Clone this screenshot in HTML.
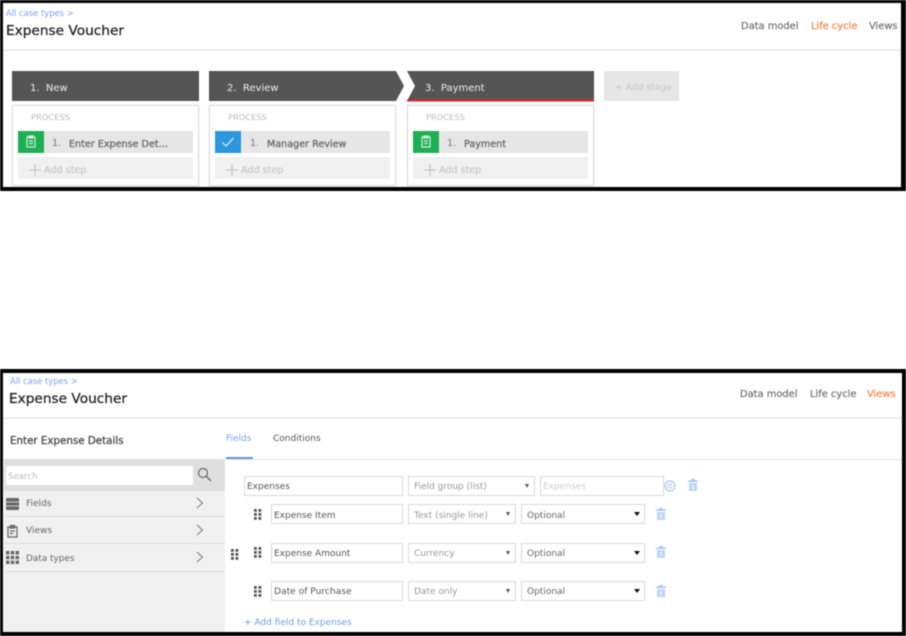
<!DOCTYPE html>
<html><head><meta charset="utf-8">
<style>
html,body{margin:0;padding:0;background:#fff}
#p{position:relative;width:906px;height:636px;overflow:hidden;background:#fff;font-family:"DejaVu Sans","Liberation Sans",sans-serif}
#b{position:absolute;left:0;top:0;width:906px;height:636px;filter:blur(.65px)}
#b div,#b svg{position:absolute}
.t{white-space:nowrap;line-height:14px;font-size:9px;color:#555}
.h{-webkit-text-stroke:.25px currentColor}
.bar{background:#555}
.card{border:1px solid #dcdcdc;box-shadow:0 0 1px #ccc;background:#fff;box-sizing:border-box}
.step{background:#e6e6e6}
.add{background:#f0f0f0}
.in{border:1px solid #d8d8d8;box-sizing:border-box;background:#fff;height:20px}
.car{width:0;height:0;border-left:2.5px solid transparent;border-right:2.5px solid transparent;border-top:4px solid #555}
.car2{border-top-color:#111;border-left-width:3px;border-right-width:3px}
.ln{background:#e3e3e3;height:1px}
</style></head><body>
<div id="p"><div id="b">
<!-- top panel frame -->
<div style="left:0;top:0;width:906px;height:3px;background:#000"></div>
<div style="left:0;top:0;width:3px;height:191px;background:#000"></div>
<div style="left:901px;top:0;width:5px;height:191px;background:#000"></div>
<div style="left:0;top:187px;width:906px;height:4px;background:#000"></div>
<div class="t" style="left:6px;top:6px;color:#7f9fea;font-size:8.4px">All case types &gt;</div>
<div class="t h" style="left:6px;top:23px;color:#222;font-size:13.7px;line-height:16px">Expense Voucher</div>
<div class="t h" style="left:741px;top:20px;color:#777;font-size:9.9px">Data model</div>
<div class="t h" style="left:811px;top:20px;color:#f58a4b;font-size:9.9px">Life cycle</div>
<div class="t h" style="left:869px;top:20px;color:#777;font-size:9.9px">Views</div>
<div style="left:3px;top:49px;width:898px;height:2px;background:#ececec"></div>
<!-- stages -->
<div class="bar" style="left:12px;top:71px;width:187px;height:30px"></div>
<svg style="left:209px;top:71px" width="195" height="30"><polygon points="0,0 187,0 195,15 187,30 0,30" fill="#555"/></svg>
<svg style="left:407px;top:71px" width="187" height="31"><polygon points="0,0 187,0 187,30 0,30 8,15" fill="#555"/><rect x="0" y="28.5" width="187" height="2" fill="#f01a1a"/></svg>
<div class="t" style="left:30px;top:82px;color:#eee;font-size:10px">1.&nbsp; New</div>
<div class="t" style="left:227px;top:82px;color:#eee;font-size:10px">2.&nbsp; Review</div>
<div class="t" style="left:425px;top:82px;color:#eee;font-size:10px">3.&nbsp; Payment</div>
<div style="left:604px;top:71px;width:75px;height:30px;background:#e6e6e6"></div>
<div class="t" style="left:615px;top:81px;color:#c4c4c4;font-size:9.2px">+ Add stage</div>
<!-- cards -->
<div class="card" style="left:12px;top:105px;width:187px;height:81px"></div>
<div class="card" style="left:209px;top:105px;width:187px;height:81px"></div>
<div class="card" style="left:407px;top:105px;width:187px;height:81px"></div>
<div class="t" style="left:31px;top:110px;color:#bbb;font-size:8.3px">PROCESS</div>
<div class="t" style="left:228px;top:110px;color:#bbb;font-size:8.3px">PROCESS</div>
<div class="t" style="left:426px;top:110px;color:#bbb;font-size:8.3px">PROCESS</div>
<div class="step" style="left:18px;top:131px;width:175px;height:22px"></div>
<div class="step" style="left:215px;top:131px;width:175px;height:22px"></div>
<div class="step" style="left:413px;top:131px;width:175px;height:22px"></div>
<div style="left:18px;top:131px;width:26px;height:22px;background:#1fae54"></div>
<div style="left:215px;top:131px;width:26px;height:22px;background:#2e96dd"></div>
<div style="left:413px;top:131px;width:26px;height:22px;background:#1fae54"></div>
<svg style="left:25px;top:134px" width="12" height="14" viewBox="0 0 12 14"><path d="M2 3h8v10H2zM4 2h4v2H4zM4 7h4M4 9.5h4" fill="none" stroke="#cdeed9" stroke-width="1.2"/></svg>
<svg style="left:420px;top:134px" width="12" height="14" viewBox="0 0 12 14"><path d="M2 3h8v10H2zM4 2h4v2H4zM4 7h4M4 9.5h4" fill="none" stroke="#cdeed9" stroke-width="1.2"/></svg>
<svg style="left:221px;top:136px" width="14" height="12" viewBox="0 0 14 12"><path d="M1.5 6.5L5 10 12.500 2" fill="none" stroke="#e6f3fc" stroke-width="1.2"/></svg>
<div class="t" style="left:52px;top:137px;color:#777;font-size:9.6px">1.</div>
<div class="t h" style="left:69px;top:138px;color:#666;font-size:9.6px">Enter Expense Det...</div>
<div class="t" style="left:250px;top:137px;color:#777;font-size:9.6px">1.</div>
<div class="t h" style="left:267px;top:138px;color:#666;font-size:9.6px">Manager Review</div>
<div class="t" style="left:447px;top:137px;color:#777;font-size:9.6px">1.</div>
<div class="t h" style="left:464px;top:138px;color:#666;font-size:9.6px">Payment</div>
<div class="add" style="left:18px;top:157px;width:175px;height:22px"></div>
<div class="add" style="left:215px;top:157px;width:175px;height:22px"></div>
<div class="add" style="left:413px;top:157px;width:175px;height:22px"></div>
<svg style="left:29px;top:164px" width="12" height="12"><path d="M6 0v12M0 6h12" stroke="#bdbdbd"/></svg>
<svg style="left:226px;top:164px" width="12" height="12"><path d="M6 0v12M0 6h12" stroke="#bdbdbd"/></svg>
<svg style="left:424px;top:164px" width="12" height="12"><path d="M6 0v12M0 6h12" stroke="#bdbdbd"/></svg>
<div class="t" style="left:44px;top:164px;color:#c0c0c0;font-size:9.6px">Add step</div>
<div class="t" style="left:241px;top:164px;color:#c0c0c0;font-size:9.6px">Add step</div>
<div class="t" style="left:439px;top:164px;color:#c0c0c0;font-size:9.6px">Add step</div>

<!-- bottom panel frame -->
<div style="left:0;top:369px;width:906px;height:4px;background:#000"></div>
<div style="left:0;top:369px;width:3px;height:267px;background:#000"></div>
<div style="left:902px;top:369px;width:4px;height:267px;background:#000"></div>
<div style="left:0;top:632px;width:906px;height:4px;background:#000"></div>
<div class="t" style="left:10px;top:374px;color:#7f9fea;font-size:8.4px">All case types &gt;</div>
<div class="t h" style="left:9px;top:391px;color:#222;font-size:13.7px;line-height:16px">Expense Voucher</div>
<div class="t h" style="left:740px;top:388px;color:#777;font-size:9.9px">Data model</div>
<div class="t h" style="left:810px;top:388px;color:#777;font-size:9.9px">Life cycle</div>
<div class="t h" style="left:867px;top:388px;color:#f58a4b;font-size:9.9px">Views</div>
<div style="left:3px;top:417px;width:899px;height:2px;background:#ececec"></div>
<div class="t h" style="left:10px;top:434px;color:#444;font-size:10.3px">Enter Expense Details</div>
<div class="t" style="left:226px;top:432px;color:#7f9fea;font-size:9px">Fields</div>
<div class="t" style="left:273px;top:432px;color:#555;font-size:9px">Conditions</div>
<div style="left:226px;top:457px;width:27px;height:2px;background:#5f97e6"></div>
<div class="ln" style="left:226px;top:459px;width:676px"></div>
<!-- left panel -->
<div style="left:4px;top:459px;width:221px;height:173px;background:#f0f0f0"></div>
<div style="left:4px;top:459px;width:221px;height:32px;background:#dfdfdf"></div>
<div style="left:6px;top:466px;width:187px;height:19px;background:#fff"></div>
<div class="t" style="left:8px;top:470px;color:#bbb;font-size:8.6px">Search</div>
<svg style="left:197px;top:467px" width="15" height="15" viewBox="0 0 15 15"><circle cx="6" cy="6" r="4.5" fill="none" stroke="#666" stroke-width="1.2"/><path d="M9.500 9.500L14 14" stroke="#666" stroke-width="1.3"/></svg>
<div class="ln" style="left:4px;top:516px;width:221px;background:#dcdcdc"></div>
<div class="ln" style="left:4px;top:543px;width:221px;background:#dcdcdc"></div>
<div class="ln" style="left:4px;top:571px;width:221px;background:#dcdcdc"></div>
<svg style="left:6px;top:498px" width="13" height="12"><rect width="13" height="12" rx="1" fill="#666"/><path d="M0 4h13M0 8h13" stroke="#ccc"/></svg>
<svg style="left:6px;top:524px" width="13" height="14" viewBox="0 0 13 14"><path d="M2 3h9v10H2zM4.500 1.500h4v2.500h-4zM4 7h5M4 9.500h3" fill="none" stroke="#666" stroke-width="1.2"/></svg>
<svg style="left:6px;top:551px" width="13" height="13"><g fill="#666"><rect width="3.400" height="3.400"/><rect x="4.800" width="3.400" height="3.400"/><rect x="9.600" width="3.400" height="3.400"/><rect y="4.800" width="3.400" height="3.400"/><rect x="4.800" y="4.800" width="3.400" height="3.400"/><rect x="9.600" y="4.800" width="3.400" height="3.400"/><rect y="9.600" width="3.400" height="3.400"/><rect x="4.800" y="9.600" width="3.400" height="3.400"/><rect x="9.600" y="9.600" width="3.400" height="3.400"/></g></svg>
<div class="t" style="left:26px;top:497px;color:#666;font-size:9px">Fields</div>
<div class="t" style="left:26px;top:524px;color:#666;font-size:9px">Views</div>
<div class="t" style="left:26px;top:552px;color:#666;font-size:8.9px">Data types</div>
<svg style="left:196px;top:497px" width="8" height="12"><path d="M1 1l5.500 5L1 11" fill="none" stroke="#777" stroke-width="1"/></svg>
<svg style="left:196px;top:524px" width="8" height="12"><path d="M1 1l5.500 5L1 11" fill="none" stroke="#777" stroke-width="1"/></svg>
<svg style="left:196px;top:551px" width="8" height="12"><path d="M1 1l5.500 5L1 11" fill="none" stroke="#777" stroke-width="1"/></svg>
<!-- form -->
<div class="in" style="left:244px;top:476px;width:159px"></div>
<div class="in" style="left:408px;top:476px;width:127px"></div>
<div class="in" style="left:540px;top:476px;width:124px"></div>
<div class="t" style="left:247px;top:480px;color:#555;font-size:9px">Expenses</div>
<div class="t" style="left:414px;top:480px;color:#999;font-size:9px">Field group (list)</div>
<div class="t" style="left:543px;top:480px;color:#ccc;font-size:9px">Expenses</div>
<div class="car" style="left:525px;top:484px"></div>
<svg style="left:663px;top:479px" width="14" height="14" viewBox="0 0 14 14"><circle cx="7" cy="7" r="5" fill="none" stroke="#a9c6f2" stroke-width="1.3"/><circle cx="7" cy="7" r="2" fill="none" stroke="#a9c6f2"/></svg>
<svg style="left:687px;top:478px" width="12" height="14" viewBox="0 0 12 14"><path d="M1 2.500h10v1.500H1zM4 1h4v1.500H4z" fill="#a9c6f2"/><path d="M2 5h8v8H2z" fill="#bcd4f6"/><path d="M6 6.500v5" stroke="#fff"/></svg>

<div class="in" style="left:271px;top:504px;width:132px"></div>
<div class="in" style="left:408px;top:504px;width:108px"></div>
<div class="in" style="left:521px;top:504px;width:124px"></div>
<div class="t" style="left:274px;top:509px;color:#555;font-size:9px">Expense Item</div>
<div class="t" style="left:414px;top:509px;color:#999;font-size:9px">Text (single line)</div>
<div class="t" style="left:527px;top:509px;color:#666;font-size:9px">Optional</div>
<div class="car" style="left:506px;top:512px"></div>
<div class="car car2" style="left:634px;top:512px"></div>

<div class="in" style="left:271px;top:543px;width:132px"></div>
<div class="in" style="left:408px;top:543px;width:108px"></div>
<div class="in" style="left:521px;top:543px;width:124px"></div>
<div class="t" style="left:274px;top:547px;color:#555;font-size:9px">Expense Amount</div>
<div class="t" style="left:414px;top:547px;color:#999;font-size:9px">Currency</div>
<div class="t" style="left:527px;top:547px;color:#666;font-size:9px">Optional</div>
<div class="car" style="left:506px;top:551px"></div>
<div class="car car2" style="left:634px;top:551px"></div>

<div class="in" style="left:271px;top:581px;width:132px"></div>
<div class="in" style="left:408px;top:581px;width:108px"></div>
<div class="in" style="left:521px;top:581px;width:124px"></div>
<div class="t" style="left:274px;top:585px;color:#555;font-size:9.100px">Date of Purchase</div>
<div class="t" style="left:414px;top:585px;color:#999;font-size:9px">Date only</div>
<div class="t" style="left:527px;top:585px;color:#666;font-size:9px">Optional</div>
<div class="car" style="left:506px;top:589px"></div>
<div class="car car2" style="left:634px;top:589px"></div>

<svg style="left:655px;top:507px" width="12" height="14" viewBox="0 0 12 14"><path d="M1 2.500h10v1.500H1zM4 1h4v1.500H4z" fill="#a9c6f2"/><path d="M2 5h8v8H2z" fill="#bcd4f6"/><path d="M6 6.500v5" stroke="#fff"/></svg>
<svg style="left:655px;top:545px" width="12" height="14" viewBox="0 0 12 14"><path d="M1 2.500h10v1.500H1zM4 1h4v1.500H4z" fill="#a9c6f2"/><path d="M2 5h8v8H2z" fill="#bcd4f6"/><path d="M6 6.500v5" stroke="#fff"/></svg>
<svg style="left:655px;top:584px" width="12" height="14" viewBox="0 0 12 14"><path d="M1 2.500h10v1.500H1zM4 1h4v1.500H4z" fill="#a9c6f2"/><path d="M2 5h8v8H2z" fill="#bcd4f6"/><path d="M6 6.500v5" stroke="#fff"/></svg>
<!-- grips -->
<svg style="left:254px;top:509px" width="8" height="11"><g fill="#555"><rect width="2.800" height="2.800"/><rect x="4.500" width="2.800" height="2.800"/><rect y="4" width="2.800" height="2.800"/><rect x="4.500" y="4" width="2.800" height="2.800"/><rect y="8" width="2.800" height="2.800"/><rect x="4.500" y="8" width="2.800" height="2.800"/></g></svg>
<svg style="left:254px;top:547px" width="8" height="11"><g fill="#555"><rect width="2.800" height="2.800"/><rect x="4.500" width="2.800" height="2.800"/><rect y="4" width="2.800" height="2.800"/><rect x="4.500" y="4" width="2.800" height="2.800"/><rect y="8" width="2.800" height="2.800"/><rect x="4.500" y="8" width="2.800" height="2.800"/></g></svg>
<svg style="left:254px;top:586px" width="8" height="11"><g fill="#555"><rect width="2.800" height="2.800"/><rect x="4.500" width="2.800" height="2.800"/><rect y="4" width="2.800" height="2.800"/><rect x="4.500" y="4" width="2.800" height="2.800"/><rect y="8" width="2.800" height="2.800"/><rect x="4.500" y="8" width="2.800" height="2.800"/></g></svg>
<svg style="left:231px;top:549px" width="8" height="11"><g fill="#555"><rect width="2.800" height="2.800"/><rect x="4.500" width="2.800" height="2.800"/><rect y="4" width="2.800" height="2.800"/><rect x="4.500" y="4" width="2.800" height="2.800"/><rect y="8" width="2.800" height="2.800"/><rect x="4.500" y="8" width="2.800" height="2.800"/></g></svg>
<div class="t" style="left:244px;top:616px;color:#6b9be6;font-size:9px">+ Add field to Expenses</div>
</div></div>
</body></html>
